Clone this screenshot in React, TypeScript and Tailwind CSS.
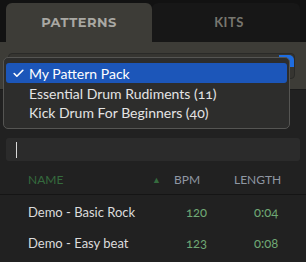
import { Check } from "lucide-react";

const rows = [
    { name: "Demo - Basic Rock", bpm: "120", len: "0:04" },
    { name: "Demo - Easy beat", bpm: "123", len: "0:08" },
];

export default function App() {
    return (
        <div className="relative w-[306px] h-[262px] overflow-hidden bg-[#212121] font-['Lato',sans-serif]">
            <div className="flex h-[42px] bg-[#121212] pt-[3px] pl-[6px] pr-[6px]">
                <div className="flex w-[146px] items-center justify-center rounded-t-[6px] bg-[#3d3c37] pt-[1px] font-['Montserrat','Lato',sans-serif] text-[13px] font-bold tracking-[0.5px] text-[#a9a8a3]">
                    PATTERNS
                </div>
                <div className="flex flex-1 items-center justify-center rounded-t-[6px] bg-[#171717] pt-[1px] pl-[6px] text-[13px] font-bold tracking-[0.5px] text-[#77766f]">
                    KITS
                </div>
            </div>

            <div className="h-[48px] bg-[#3d3c37] pl-[8px] pr-[11px] pt-[11px] border-b border-[#1a1a1a]">
                <div className="flex h-[26px] rounded-[4px] border border-[#2a2a28] bg-[#363531]">
                    <div className="flex-1"></div>
                    <div className="mt-[1px] h-[12px] w-[15px] rounded-tr-[5px] bg-[#1f6de0]"></div>
                </div>
            </div>

            <div className="absolute left-[3px] top-[57px] w-[287px] rounded-[5px] border border-[#555553] bg-[#2d2d2c] px-[2px] pt-[5px] pb-[6px] text-[14px] text-[#e4e4e4] oldstyle-nums">
                <div className="flex h-[20px] items-center rounded-[3px] bg-[#1c56b9] text-white">
                    <Check size={13} strokeWidth={3} className="ml-[6px] mr-[4px]" />
                    <span>My Pattern Pack</span>
                </div>
                <div className="flex h-[20px] items-center pl-[23px]">Essential Drum Rudiments (11)</div>
                <div className="flex h-[19px] items-center pl-[23px]">Kick Drum For Beginners (40)</div>
            </div>

            <div className="px-[6px] pt-[48px]">
                <div className="flex h-[23px] items-center rounded-[3px] bg-[#2b2b2b] pl-[10px]">
                    <div className="h-[16px] w-[1px] bg-[#d8d8d8]"></div>
                </div>
            </div>

            <div className="flex h-[32px] items-center border-b border-[#151515] text-[12px] mt-[2px] pt-[2px]">
                <span className="ml-[28px] w-[124px] text-[#356b3e]">NAME</span>
                <span className="w-[22px] text-[9px] text-[#356b3e]">▲</span>
                <span className="w-[60px] text-[#8f97a3]">BPM</span>
                <span className="text-[#8f97a3]">LENGTH</span>
            </div>

            <div className="text-[13px] pt-[2px]">
                {rows.map((r) => (
                    <div key={r.name} className="flex h-[31px] items-center oldstyle-nums">
                        <span className="ml-[28px] w-[158px] text-[#dcdcdc]">{r.name}</span>
                        <span className="w-[68px] text-[#6fa874]">{r.bpm}</span>
                        <span className="text-[#6fa874]">{r.len}</span>
                    </div>
                ))}
            </div>
        </div>
    );
}
